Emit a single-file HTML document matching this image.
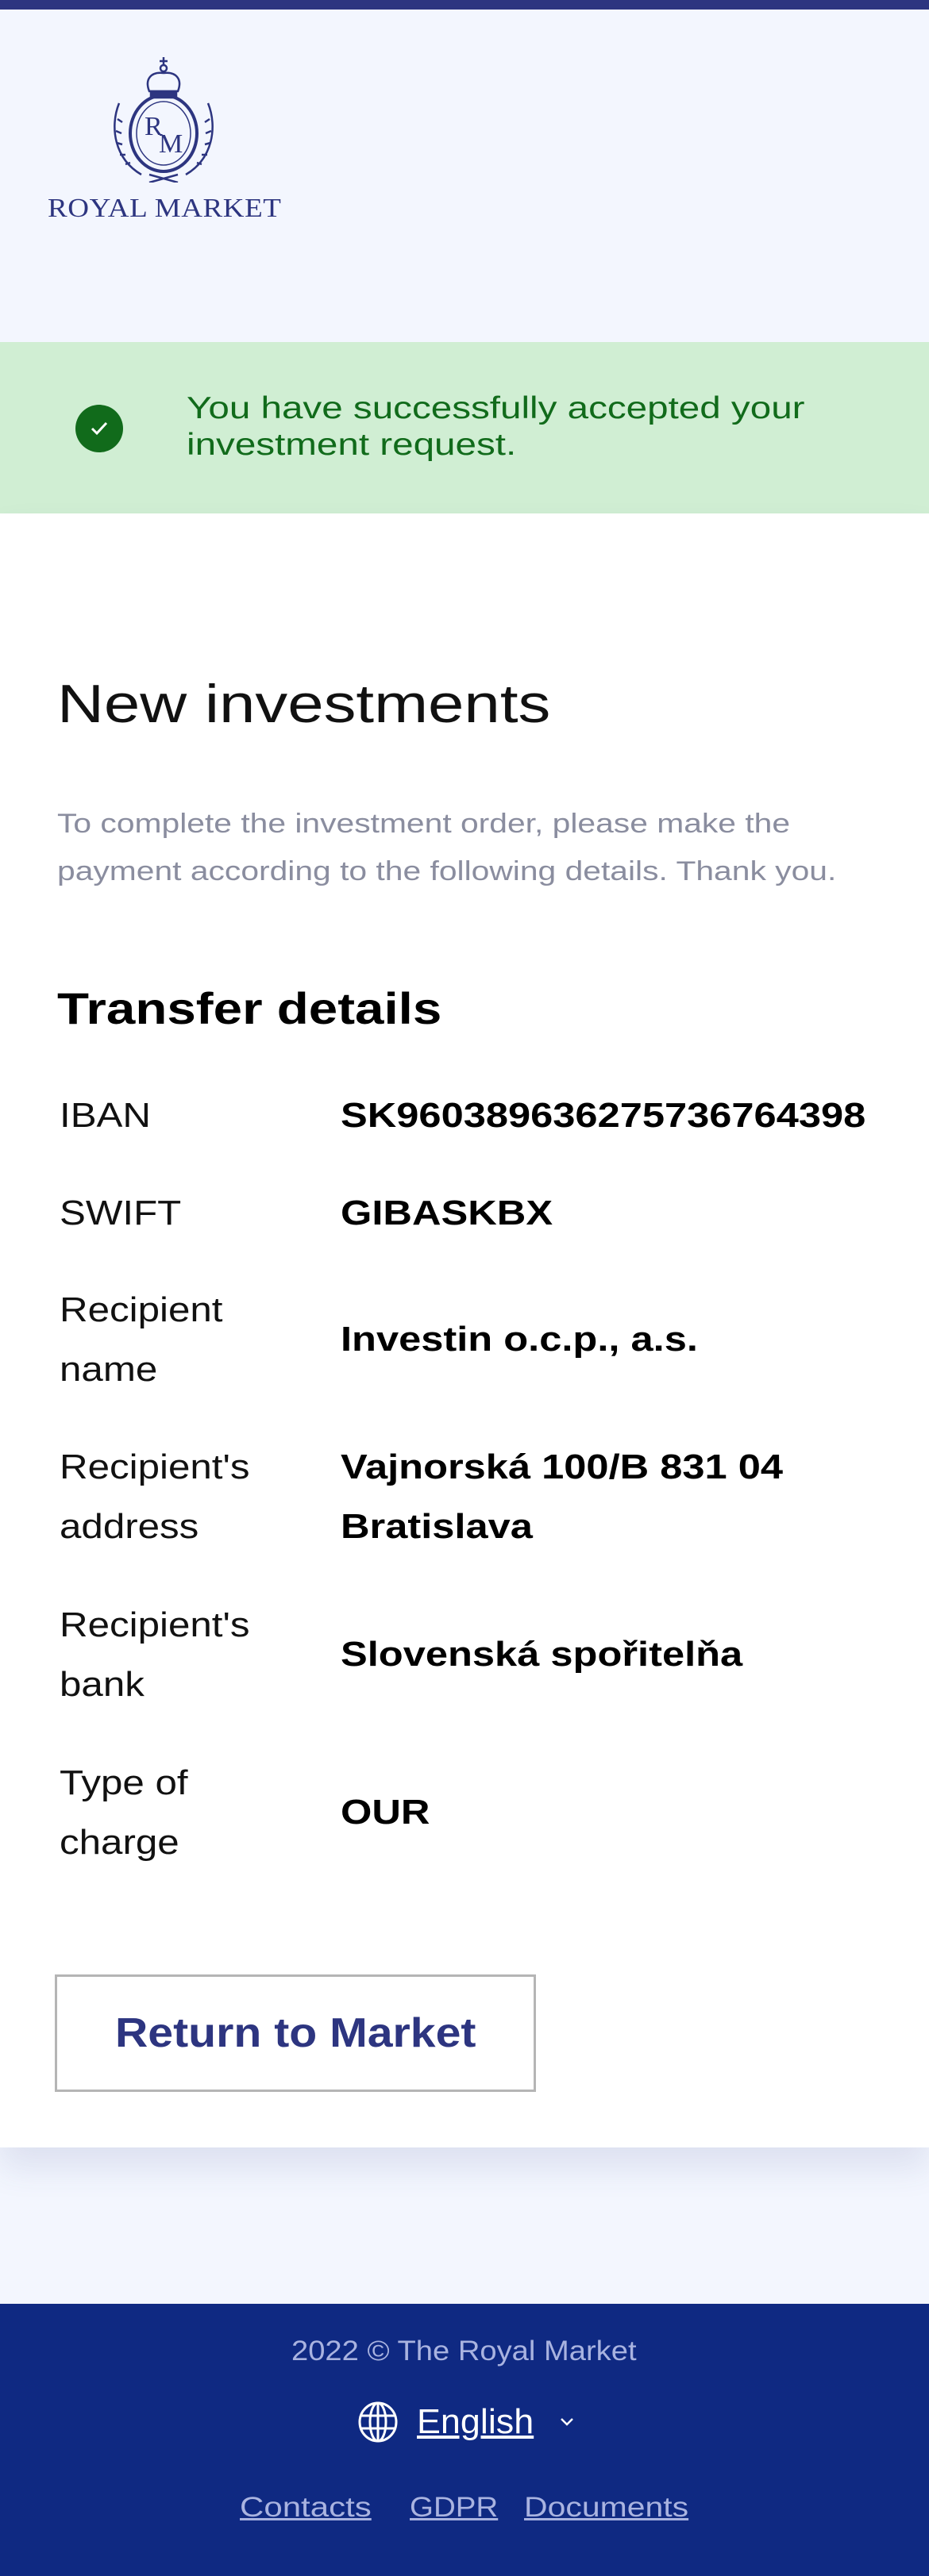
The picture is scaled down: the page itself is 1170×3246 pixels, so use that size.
<!DOCTYPE html>
<html><head><meta charset="utf-8"><style>
*{margin:0;padding:0;box-sizing:border-box}
body{width:1170px;height:3246px;position:relative;background:#f3f6fe;font-family:"Liberation Sans",sans-serif;overflow:hidden}
.a{position:absolute;white-space:nowrap;transform-origin:0 0}
.lbl{position:absolute;left:75px;font-size:44px;line-height:75px;color:#111;white-space:nowrap;transform:scaleX(1.12);transform-origin:0 0}
.val{position:absolute;left:429px;font-size:44px;font-weight:bold;line-height:75px;color:#000;white-space:nowrap;transform:scaleX(1.15);transform-origin:0 0}
</style></head><body>
<div class="a" style="left:0;top:0;width:1170px;height:12px;background:#2d3580"></div>
<svg class="a" style="left:138px;top:70px" width="136" height="160" viewBox="0 0 136 160" fill="none" stroke="#2d3580" stroke-width="2.5">
<path d="M68 2v10M63 7h10"/><circle cx="68" cy="16" r="4"/>
<path d="M50 45 C44 30 52 20 68 22 C84 20 92 30 86 45 Z"/><path d="M52 45h32v8H52z" fill="#2d3580"/>
<ellipse cx="68" cy="98" rx="42" ry="48" stroke-width="4"/><ellipse cx="68" cy="98" rx="34" ry="40" stroke-width="1.5"/>
<path d="M12 60 C0 90 6 130 40 150M124 60 C136 90 130 130 96 150M50 150 L86 160M86 150 L50 160"/>
<path d="M10 80l6 4M8 95l7 3M9 110l7 2M13 125l7 0M20 137l6-2M126 80l-6 4M128 95l-7 3M127 110l-7 2M123 125l-7 0M116 137l-6-2"/>
<text x="44" y="100" font-family="Liberation Serif" font-size="34" fill="#2d3580" stroke="none">R</text>
<text x="62" y="122" font-family="Liberation Serif" font-size="34" fill="#2d3580" stroke="none">M</text>
</svg>
<div class="a" style="left:60px;top:244px;font-family:'Liberation Serif',serif;font-size:34px;color:#2d3580;letter-spacing:0.5px;transform:scaleX(1.09)">ROYAL MARKET</div>

<div class="a" style="left:0;top:431px;width:1170px;height:216px;background:#d0eed3"></div>
<div class="a" style="left:95px;top:510px;width:60px;height:60px;border-radius:50%;background:#116b1b"></div>
<svg class="a" style="left:112px;top:528px" width="26" height="24" viewBox="0 0 26 24"><path d="M4 12l6 6L22 5" stroke="#fff" stroke-width="3" fill="none"/></svg>
<div class="a" style="left:235px;top:492px;font-size:39px;line-height:46px;color:#116b1b;transform:scaleX(1.22)">You have successfully accepted your<br>investment request.</div>

<div class="a" style="left:0;top:647px;width:1170px;height:2059px;background:#fff;box-shadow:0 25px 40px rgba(60,70,140,0.12)"></div>
<div class="a" style="left:72px;top:842px;font-size:68px;line-height:90px;color:#111;transform:scaleX(1.2)">New investments</div>
<div class="a" style="left:72px;top:1008px;font-size:34px;line-height:60px;color:#8a8d9f;transform:scaleX(1.2)">To complete the investment order, please make the<br>payment according to the following details. Thank you.</div>
<div class="a" style="left:72px;top:1236px;font-size:56px;font-weight:bold;line-height:70px;color:#000;transform:scaleX(1.17)">Transfer details</div>

<div class="lbl" style="top:1368px">IBAN</div><div class="val" style="top:1368px">SK960389636275736764398</div>
<div class="lbl" style="top:1491px">SWIFT</div><div class="val" style="top:1491px">GIBASKBX</div>
<div class="lbl" style="top:1613px">Recipient<br>name</div><div class="val" style="top:1650px">Investin o.c.p., a.s.</div>
<div class="lbl" style="top:1811px">Recipient's<br>address</div><div class="val" style="top:1811px">Vajnorská 100/B 831 04<br>Bratislava</div>
<div class="lbl" style="top:2010px">Recipient's<br>bank</div><div class="val" style="top:2047px">Slovenská spořitelňa</div>
<div class="lbl" style="top:2209px">Type of<br>charge</div><div class="val" style="top:2246px">OUR</div>

<div class="a" style="left:69px;top:2488px;width:606px;height:148px;border:3px solid #b5b5b5;background:#fff"></div>
<div class="a" style="left:145px;top:2488px;line-height:148px;font-size:52px;font-weight:bold;color:#2d3580;transform:scaleX(1.1)">Return to Market</div>

<div class="a" style="left:0;top:2903px;width:1170px;height:343px;background:#0f2982"></div>
<div class="a" style="left:367px;top:2940px;font-size:35px;line-height:46px;color:#a9b3e0;transform:scaleX(1.09)">2022 © The Royal Market</div>
<svg class="a" style="left:451px;top:3026px" width="50" height="52" viewBox="0 0 50 52" fill="none" stroke="#fff" stroke-width="3"><ellipse cx="25" cy="26" rx="23" ry="24"/><ellipse cx="25" cy="26" rx="10" ry="24"/><path d="M25 2v48M3 18h44M3 34h44"/></svg>
<div class="a" style="left:525px;top:3025px;font-size:44px;line-height:54px;color:#fff;text-decoration:underline;transform:scaleX(1.02)">English</div>
<svg class="a" style="left:704px;top:3045px" width="20" height="14" viewBox="0 0 20 14"><path d="M3 3l7 7 7-7" stroke="#fff" stroke-width="2.5" fill="none"/></svg>
<div class="a" style="left:302px;top:3137px;font-size:35px;line-height:46px;color:#a9b3e0;text-decoration:underline;transform:scaleX(1.2)">Contacts</div>
<div class="a" style="left:516px;top:3137px;font-size:35px;line-height:46px;color:#a9b3e0;text-decoration:underline;transform:scaleX(1.1)">GDPR</div>
<div class="a" style="left:660px;top:3137px;font-size:35px;line-height:46px;color:#a9b3e0;text-decoration:underline;transform:scaleX(1.17)">Documents</div>
</body></html>
